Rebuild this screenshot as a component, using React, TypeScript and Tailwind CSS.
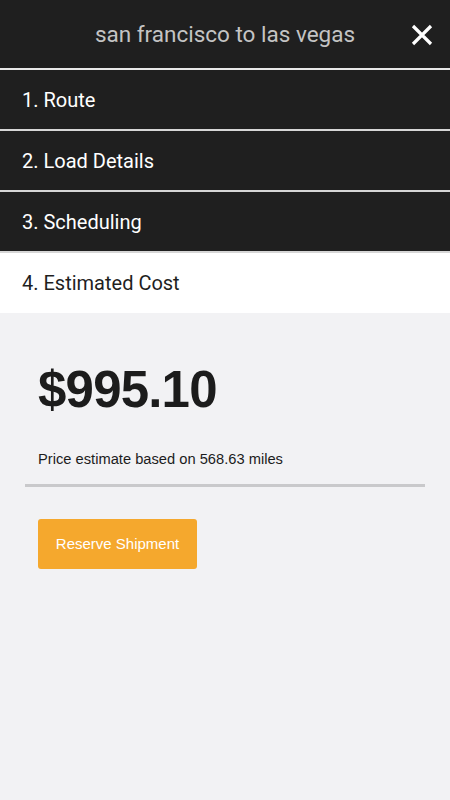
const steps = ["1. Route", "2. Load Details", "3. Scheduling"];

export default function App() {
  return (
    <div className="flex min-h-[800px] w-[450px] flex-col bg-[#f2f2f4] font-['Roboto',sans-serif]">
      <header className="relative flex h-[68px] items-center justify-center bg-[#1f1f1f]">
        <h1 className="mt-[2px] text-[22.5px] text-[#c4c4c4]">san francisco to las vegas</h1>
        <button className="absolute right-[17px] top-[24px] text-white">
          <svg width="22" height="22" viewBox="0 0 22 22">
            <path d="M2 2L20 20M20 2L2 20" stroke="currentColor" strokeWidth="3.2" />
          </svg>
        </button>
      </header>
      <div className="h-[2px] bg-[#e8e8e8]" />
      {steps.map((s) => (
        <div key={s}>
          <div className="flex h-[59px] items-center bg-[#1f1f1f] px-[22px] text-[20px] text-white">
            {s}
          </div>
          <div className="h-[2px] bg-[#d6d6d6]" />
        </div>
      ))}
      <div className="flex h-[60px] items-center bg-white px-[22px] text-[20px] text-[#1f1f1f]">
        4. Estimated Cost
      </div>
      <div className="flex flex-col font-['Liberation_Sans',Arial,sans-serif]">
        <div className="px-[38px] pt-[51px] text-[51px] font-bold leading-none tracking-[-0.8px] text-[#1c1c1c]">
          $995.10
        </div>
        <p className="px-[38px] pt-[33px] text-[14.7px] text-[#1c1c1c]">
          Price estimate based on 568.63 miles
        </p>
        <div className="mx-[25px] mt-[14px] h-[3px] bg-[#c9c9cb]" />
        <div className="px-[38px] pt-[32px]">
          <button className="h-[50px] w-[159px] rounded-[3px] bg-[#f5a82d] text-[15px] text-white">
            Reserve Shipment
          </button>
        </div>
      </div>
    </div>
  );
}
